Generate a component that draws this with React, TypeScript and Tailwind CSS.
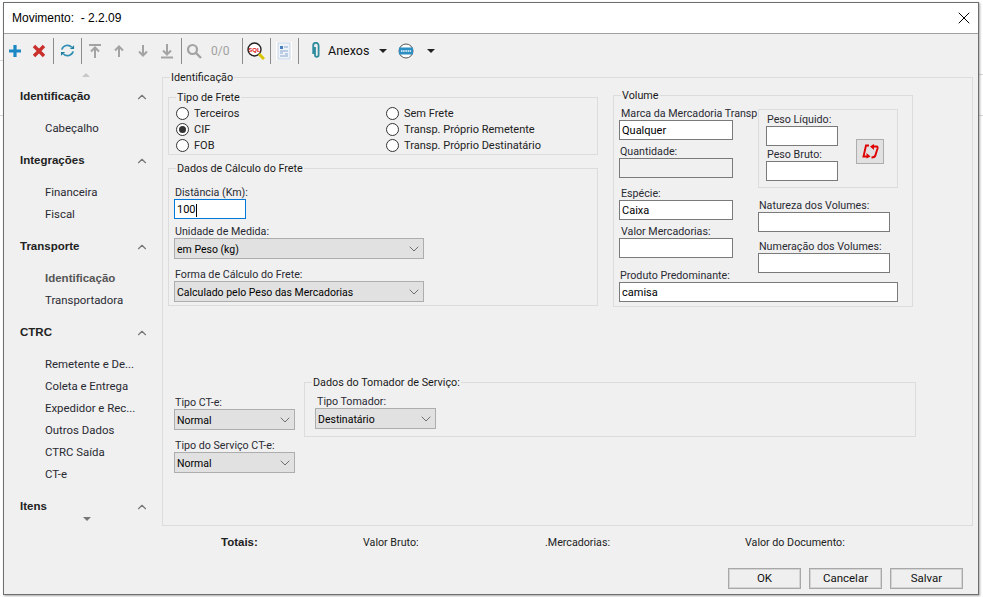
import React from 'react';
import { ChevronUp, ChevronDown, X } from 'lucide-react';

const BODY = "font-['Roboto','Liberation_Sans',Arial,sans-serif]";
const BOLD = "font-['Liberation_Sans',Arial,sans-serif] font-bold text-[11.5px]";

const Sep = () => (
  <div className="w-1 flex justify-center shrink-0">
    <div className="w-px h-[26px] bg-[#8c8c8c]" />
  </div>
);

const Cell = ({ children, className = 'w-6' }: { children: React.ReactNode; className?: string }) => (
  <div className={`${className} flex justify-center shrink-0`}>{children}</div>
);

const Legend = ({ children }: { children: React.ReactNode }) => (
  <div className="absolute top-[-8px] left-[7px] bg-[#f0f0f0] px-[1px] h-[14px] leading-[16px] text-[10.8px] text-[#1a1a1a] whitespace-nowrap">{children}</div>
);

const Group = ({ title, className = '', children }: { title?: string; className?: string; children: React.ReactNode }) => (
  <div className={`relative border border-[#dcdcdc] shrink-0 ${className}`}>
    {title && <Legend>{title}</Legend>}
    {children}
  </div>
);

const Radio = ({ label, checked }: { label: string; checked?: boolean }) => (
  <div className="flex items-center h-4 gap-[5px]">
    <span className="w-[13px] h-[13px] rounded-full border border-[#333] bg-white flex items-center justify-center shrink-0">
      {checked && <span className="w-[7px] h-[7px] rounded-full bg-[#333]" />}
    </span>
    <span className="text-[11px] h-4 leading-[18px] text-[#222]">{label}</span>
  </div>
);

const Field = ({ value = '', w, disabled, focus }: { value?: string; w: string; disabled?: boolean; focus?: boolean }) => (
  <div className={`${w} h-5 border flex items-center pl-[2px] pr-[2px] pt-[2px] text-[11px] text-black ${focus ? 'border-[#0078d7] bg-white' : disabled ? 'border-[#7a7a7a] bg-[#f0f0f0]' : 'border-[#7a7a7a] bg-white'}`}>
    {value}
    {focus && <span className="w-px h-[13px] bg-black" />}
  </div>
);

const Select = ({ value, w }: { value: string; w: string }) => (
  <div className={`${w} h-[21px] border border-[#adadad] bg-[#e1e1e1] flex items-center justify-between pl-[2px] pr-[1px] text-[10.5px] text-black`}>
    <span className="pt-[2px]">{value}</span>
    <ChevronDown size={16} strokeWidth={1} className="text-[#333]" />
  </div>
);

const Label = ({ children, className = '' }: { children: React.ReactNode; className?: string }) => (
  <div className={`text-[10.7px] h-[14px] leading-[16px] text-[#2a2a33] whitespace-nowrap ${className}`}>{children}</div>
);

const navGroups = [
  { title: 'Identificação', top: 'mt-[11px]', items: ['Cabeçalho'] },
  { title: 'Integrações', top: 'mt-[16px]', items: ['Financeira', 'Fiscal'] },
  { title: 'Transporte', top: 'mt-[16px]', items: ['Identificação', 'Transportadora'] },
  { title: 'CTRC', top: 'mt-[16px]', items: ['Remetente e De...', 'Coleta e Entrega', 'Expedidor e Rec...', 'Outros Dados', 'CTRC Saída', 'CT-e'] },
  { title: 'Itens', top: 'mt-[16px]', items: [] as string[] },
];

const Sidebar = () => (
  <aside className="w-[158px] shrink-0 pl-[16px] pr-[12px] pt-[6px]">
    <div className="flex justify-center pl-[2px]">
      <div className="w-0 h-0 border-x-[4px] border-x-transparent border-b-[4px] border-b-[#c8c8c8]" />
    </div>
    {navGroups.map((g) => (
      <div key={g.title} className={g.top}>
        <div className="flex items-center justify-between h-4 pt-[2px] pr-[1px]">
          <span className={`${BOLD} text-[#222]`}>{g.title}</span>
          <ChevronUp size={14} strokeWidth={2} className="text-[#777]" />
        </div>
        {g.items.length > 0 && (
          <div className="mt-[16px] pl-[25px] flex flex-col gap-[6px]">
            {g.items.map((i) => (
              <div
                key={i}
                className={`h-4 leading-4 whitespace-nowrap ${
                  g.title === 'Transporte' && i === 'Identificação' ? `${BOLD} text-[#555]` : 'text-[11.4px] text-[#2a2a33]'
                }`}
              >
                {i}
              </div>
            ))}
          </div>
        )}
      </div>
    ))}
    <div className="flex justify-center pl-[3px] mt-[3px]">
      <div className="w-0 h-0 border-x-[4px] border-x-transparent border-t-[4px] border-t-[#777]" />
    </div>
  </aside>
);

const ToolIcons = {
  Plus: () => (
    <svg width="14" height="14" viewBox="0 0 14 14"><path d="M7 1v12M1 7h12" stroke="#1b87c4" strokeWidth="3.2" /></svg>
  ),
  Del: () => (
    <svg width="14" height="14" viewBox="0 0 14 14"><path d="M2 2l10 10M12 2L2 12" stroke="#c9302c" strokeWidth="3.4" /></svg>
  ),
  Refresh: () => (
    <svg width="15" height="15" viewBox="0 0 16 16" fill="none">
      <path d="M2 7a6 5.5 0 0 1 10.5-2.5" stroke="#2f8fb5" strokeWidth="1.8" />
      <path d="M14 9a6 5.5 0 0 1-10.5 2.5" stroke="#2f8fb5" strokeWidth="1.8" />
      <path d="M10.5 6.5h4.5v-4z" fill="#1f7f9f" />
      <path d="M5.5 9.5H1v4z" fill="#1f7f9f" />
    </svg>
  ),
  First: () => (
    <svg width="14" height="16" viewBox="0 0 14 16" fill="none" stroke="#a3a3a3" strokeWidth="2"><path d="M1 2h12M7 15V5M3 8.5l4-4 4 4" /></svg>
  ),
  Up: () => (
    <svg width="12" height="14" viewBox="0 0 12 14" fill="none" stroke="#a3a3a3" strokeWidth="2"><path d="M6 13V3M2 6.5l4-4 4 4" /></svg>
  ),
  Down: () => (
    <svg width="12" height="14" viewBox="0 0 12 14" fill="none" stroke="#a3a3a3" strokeWidth="2"><path d="M6 1v10M2 7.5l4 4 4-4" /></svg>
  ),
  Last: () => (
    <svg width="14" height="16" viewBox="0 0 14 16" fill="none" stroke="#a3a3a3" strokeWidth="2"><path d="M1 14.5h12M7 1v10M3 7.5l4 4 4-4" /></svg>
  ),
  Search: () => (
    <svg width="16" height="16" viewBox="0 0 16 16" fill="none" stroke="#a3a3a3"><circle cx="6.5" cy="6.5" r="4.5" strokeWidth="2.2" /><path d="M10 10l5 5" strokeWidth="2.4" /></svg>
  ),
  Sql: () => (
    <svg width="18" height="18" viewBox="0 0 18 18" fill="none">
      <circle cx="7.5" cy="7.5" r="6.5" fill="#fff" stroke="#222" strokeWidth="1.4" />
      <text x="7.5" y="9.5" textAnchor="middle" fontSize="6" fontWeight="700" fontFamily="Liberation Sans, sans-serif" fill="#d11">SQL</text>
      <path d="M12 12l5 5" stroke="#d8c400" strokeWidth="3" />
    </svg>
  ),
  Doc: () => (
    <svg width="16" height="18" viewBox="0 0 16 18" fill="none">
      <rect width="16" height="18" fill="#fff" />
      <rect x="2" y="1" width="12" height="16" fill="#eef3fa" stroke="#c5d3e6" />
      <rect x="4" y="4" width="3" height="3" fill="#4a7fc0" />
      <path d="M8 5h4M4 9h8M4 11h3M9 12h3M4 14h8" stroke="#8aa6cc" />
    </svg>
  ),
  Clip: () => (
    <svg width="11" height="17" viewBox="0 0 11 17" fill="none" stroke="#2e8c9c" strokeWidth="1.8">
      <path d="M4 5v8a1.8 1.8 0 0 0 3.6 0V3.5a2.7 2.7 0 0 0-5.4 0V12" />
    </svg>
  ),
  Web: () => (
    <svg width="16" height="16" viewBox="0 0 16 16">
      <circle cx="8" cy="8" r="7" fill="#fff" stroke="#555" />
      <rect x="1" y="4.5" width="14" height="7" fill="#2e8fc4" />
      <path d="M3 8h10" stroke="#fff" strokeWidth="1.5" strokeDasharray="1.5 .7" />
    </svg>
  ),
};

const Caret = () => <div className="w-0 h-0 border-x-[4px] border-x-transparent border-t-[4px] border-t-[#222] shrink-0" />;

const Toolbar = () => (
  <div className="h-[33px] flex items-center ml-[-1px] shrink-0">
    <Cell><ToolIcons.Plus /></Cell>
    <Cell><ToolIcons.Del /></Cell>
    <Sep />
    <Cell><ToolIcons.Refresh /></Cell>
    <Sep />
    <Cell><ToolIcons.First /></Cell>
    <Cell><ToolIcons.Up /></Cell>
    <Cell><ToolIcons.Down /></Cell>
    <Cell><ToolIcons.Last /></Cell>
    <Sep />
    <Cell className="w-[22px]"><ToolIcons.Search /></Cell>
    <span className="ml-[6px] w-[29px] text-[12px] text-[#a0a0a0]">0/0</span>
    <Sep />
    <Cell><ToolIcons.Sql /></Cell>
    <Sep />
    <Cell><ToolIcons.Doc /></Cell>
    <Sep />
    <Cell className="w-6 ml-1"><ToolIcons.Clip /></Cell>
    <span className="w-[51px] pt-[2px] text-[12.5px] text-[#111]">Anexos</span>
    <Caret />
    <div className="ml-[11px]"><ToolIcons.Web /></div>
    <div className="ml-[13px]"><Caret /></div>
  </div>
);

const Main = () => (
  <Group title="Identificação" className="w-[811px] h-[449px] mt-[10px]">
    <div className="pt-[19px] pl-[5px] flex">
      <div className="w-[430px] shrink-0 flex flex-col">
        <Group title="Tipo de Frete" className="w-[430px] h-[58px]">
          <div className="grid grid-cols-[210px_1fr] pt-[7px] pl-[7px]">
            <Radio label="Terceiros" />
            <Radio label="Sem Frete" />
            <Radio label="CIF" checked />
            <Radio label="Transp. Próprio Remetente" />
            <Radio label="FOB" />
            <Radio label="Transp. Próprio Destinatário" />
          </div>
        </Group>
        <Group title="Dados de Cálculo do Frete" className="w-[430px] h-[138px] mt-[13px]">
          <div className="pl-[5px] pt-[16px]">
            <Label className="pl-[1px]">Distância (Km):</Label>
            <Field value="100" w="w-[72px]" focus />
            <Label className="pl-[1px] mt-[5px]">Unidade de Medida:</Label>
            <Select value="em Peso (kg)" w="w-[250px]" />
            <Label className="pl-[1px] mt-[8px]">Forma de Cálculo do Frete:</Label>
            <Select value="Calculado pelo Peso das Mercadorias" w="w-[250px]" />
          </div>
        </Group>
      </div>
      <Group title="Volume" className="w-[300px] h-[212px] ml-[15px] mt-[-2px]">
        <div className="flex pl-[5px] pt-[10px]">
          <div className="w-[114px] shrink-0">
            <Label className="pl-[2px]">Marca da Mercadoria Transp</Label>
            <Field value="Qualquer" w="w-[114px]" />
            <Label className="pl-[1px] mt-[4px]">Quantidade:</Label>
            <Field w="w-[114px]" disabled />
            <Label className="pl-[2px] mt-[8px]">Espécie:</Label>
            <Field value="Caixa" w="w-[114px]" />
            <Label className="pl-[2px] mt-[4px]">Valor Mercadorias:</Label>
            <Field w="w-[114px]" />
          </div>
          <div className="ml-[25px] w-[140px] mt-[3px]">
            <div className="w-[140px] h-[79px] border border-[#dcdcdc] pl-[7px] flex">
              <div>
                <Label className="pl-[1px] mt-[2px]">Peso Líquido:</Label>
                <Field w="w-[72px]" />
                <Label className="pl-[1px] mt-[1px]">Peso Bruto:</Label>
                <Field w="w-[72px]" />
              </div>
              <div className="ml-[18px] mt-[29px] w-7 h-[25px] border border-[#adadad] bg-[#e1e1e1] flex items-center justify-center">
                <svg width="17" height="15" viewBox="0 0 17 15" fill="none" stroke="#e00000" strokeWidth="1.9">
                  <path d="M7 1.5H4L1.5 12.5H5" />
                  <path d="M10 2.5H14.5Q16 2.5 15.5 4.5L13.5 11Q13 13.5 9.5 13.5" />
                  <path d="M4.5 9L8.5 12.5L4.5 14.5z" fill="#e00000" stroke="none" />
                  <path d="M12 0L8 2.5L12 6z" fill="#e00000" stroke="none" />
                </svg>
              </div>
            </div>
            <Label className="pl-[1px] mt-[10px]">Natureza dos Volumes:</Label>
            <Field w="w-[132px]" />
            <Label className="pl-[1px] mt-[7px]">Numeração dos Volumes:</Label>
            <Field w="w-[132px]" />
          </div>
        </div>
        <div className="pl-[5px] mt-[-5px]">
          <Label className="pl-[1px]">Produto Predominante:</Label>
          <Field value="camisa" w="w-[279px]" />
        </div>
      </Group>
    </div>
    <div className="flex mt-[75px] pl-[11px]">
      <div className="w-[121px] pt-[13px] shrink-0">
        <Label className="pl-[1px]">Tipo CT-e:</Label>
        <Select value="Normal" w="w-[121px]" />
        <Label className="pl-[1px] mt-[8px]">Tipo do Serviço CT-e:</Label>
        <Select value="Normal" w="w-[121px]" />
      </div>
      <Group title="Dados do Tomador de Serviço:" className="w-[612px] h-[55px] ml-[9px]">
        <div className="pl-[10px] pt-[11px]">
          <Label className="pl-[2px]">Tipo Tomador:</Label>
          <Select value="Destinatário" w="w-[121px]" />
        </div>
      </Group>
    </div>
  </Group>
);

const Footer = () => (
  <>
    <div className="h-[32px] flex items-center pt-[2px] shrink-0 text-[10.7px] text-[#222] whitespace-nowrap">
      <span className={`ml-[59px] w-[142px] ${BOLD}`}>Totais:</span>
      <span className="w-[182px]">Valor Bruto:</span>
      <span className="w-[200px]">.Mercadorias:</span>
      <span>Valor do Documento:</span>
    </div>
    <div className="flex justify-end gap-[8px] pr-[15px] pt-[10px]">
      {['OK', 'Cancelar', 'Salvar'].map((b) => (
        <div key={b} className="w-[73px] h-[21px] border border-[#a8a8a8] shadow-[inset_0_0_0_1px_#d4d4d4] bg-[#efefef] flex items-center justify-center text-[11.5px] text-[#111]">{b}</div>
      ))}
    </div>
  </>
);

export default function App() {
  return (
    <div className={`relative w-[983px] h-[597px] bg-white overflow-hidden ${BODY}`}>
      {/* page behind the dialog, only its edges show */}
      <div className="absolute top-[60px] left-0 w-[3px] h-px bg-[#d8d8d8]" />
      <div className="absolute top-[115px] left-0 w-[3px] h-px bg-[#d8d8d8]" />
      <div className="absolute top-[74px] right-0 w-[4px] h-px bg-[#d8d8d8]" />
      <div className="absolute top-[115px] right-0 w-[4px] h-px bg-[#d8d8d8]" />
      <div className="relative w-[976px] h-[593px] ml-[3px] top-[2px] border border-[#6e6e6e] bg-[#f0f0f0] flex flex-col shadow-[1px_1px_2px_rgba(0,0,0,0.35)]">
        <div className="h-[31px] bg-white border-b border-[#a0a0a0] flex items-center justify-between pl-[8px] pr-[4px] shrink-0">
          <span className="font-['Liberation_Sans',Arial,sans-serif] text-[12px] text-black">Movimento:&nbsp; - 2.2.09</span>
          <X size={20} strokeWidth={1.2} className="text-black" />
        </div>
        <Toolbar />
        <div className="flex flex-1 min-h-0">
          <Sidebar />
          <div className="flex-1 flex flex-col min-w-0">
            <Main />
            <Footer />
          </div>
        </div>
      </div>
    </div>
  );
}
